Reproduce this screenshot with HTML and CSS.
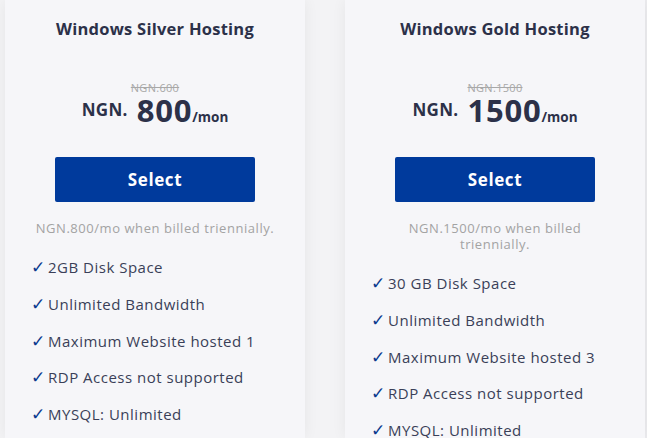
FILE: index.html
```html
<!DOCTYPE html>
<html>
<head>
<meta charset="utf-8">
<link rel="stylesheet" href="styles.css">
</head>
<body>
<div class="plans">
  <div class="card">
    <h3 class="title">Windows Silver Hosting</h3>
    <div class="old">NGN.600</div>
    <div class="price"><span class="cur">NGN.</span><span class="amt">800</span><span class="per">/mon</span></div>
    <a class="btn">Select</a>
    <p class="billed">NGN.800/mo when billed triennially.</p>
    <ul class="features">
      <li><span class="chk">✓</span>2GB Disk Space</li>
      <li><span class="chk">✓</span>Unlimited Bandwidth</li>
      <li><span class="chk">✓</span>Maximum Website hosted 1</li>
      <li><span class="chk">✓</span>RDP Access not supported</li>
      <li><span class="chk">✓</span>MYSQL: Unlimited</li>
    </ul>
  </div>
  <div class="card">
    <h3 class="title">Windows Gold Hosting</h3>
    <div class="old">NGN.1500</div>
    <div class="price"><span class="cur">NGN.</span><span class="amt">1500</span><span class="per">/mon</span></div>
    <a class="btn">Select</a>
    <p class="billed">NGN.1500/mo when billed<br>triennially.</p>
    <ul class="features">
      <li><span class="chk">✓</span>30 GB Disk Space</li>
      <li><span class="chk">✓</span>Unlimited Bandwidth</li>
      <li><span class="chk">✓</span>Maximum Website hosted 3</li>
      <li><span class="chk">✓</span>RDP Access not supported</li>
      <li><span class="chk">✓</span>MYSQL: Unlimited</li>
    </ul>
  </div>
</div>
</body>
</html>
```

FILE: styles.css
```css
html, body {
  margin: 0;
  padding: 0;
  background: #ececef;
  font-family: "Open Sans", "Liberation Sans", sans-serif;
  overflow: hidden;
}
.plans {
  display: flex;
  gap: 40px;
  padding-left: 5px;
  height: 438px;
  background: #f3f3f5;
  margin-right: 2px;
}
.card {
  width: 300px;
  flex: none;
  background: #f6f6f9;
  box-shadow: 0 0 14px rgba(0,0,0,0.06);
  display: flex;
  flex-direction: column;
  align-items: center;
}
.card > * {
  flex-shrink: 0;
}
.title {
  margin: 17px 0 0;
  font-size: 16.5px;
  font-weight: 700;
  color: #2c3149;
  letter-spacing: 0.25px;
}
.old {
  margin-top: 41px;
  font-size: 11px;
  color: #a8a8a8;
  text-decoration: line-through;
  line-height: 14px;
  letter-spacing: 0.3px;
}
.price {
  display: flex;
  align-items: baseline;
  color: #2c3149;
  font-weight: 700;
  margin-top: 0;
  height: 30px;
  line-height: 30px;
}
.cur {
  font-size: 17px;
  margin-right: 9px;
  position: relative;
  top: -6px;
  letter-spacing: 0.3px;
}
.amt {
  font-size: 31px;
  letter-spacing: 0.8px;
}
.per {
  font-size: 13.5px;
}
.btn {
  margin-top: 32px;
  width: 200px;
  height: 45px;
  background: #003a9c;
  border-radius: 2px;
  color: #fff;
  font-weight: 700;
  font-size: 17px;
  display: flex;
  align-items: center;
  justify-content: center;
  letter-spacing: 0.6px;
}
.billed {
  margin: 18px 0 0;
  font-size: 13px;
  line-height: 16px;
  color: #a3a3a3;
  text-align: center;
  width: 270px;
  letter-spacing: 0.55px;
}
.features {
  list-style: none;
  margin: 21px 0 0;
  padding: 0 0 0 26px;
  align-self: stretch;
}
.features li {
  font-size: 15px;
  line-height: 20px;
  color: #3a3f58;
  margin-bottom: 16.8px;
  letter-spacing: 0.5px;
}
.chk {
  color: #0a3a8f;
  font-weight: 700;
  display: inline-block;
  width: 17px;
  font-family: "DejaVu Sans", sans-serif;
  font-size: 17px;
  line-height: 20px;
  vertical-align: top;
}
```
